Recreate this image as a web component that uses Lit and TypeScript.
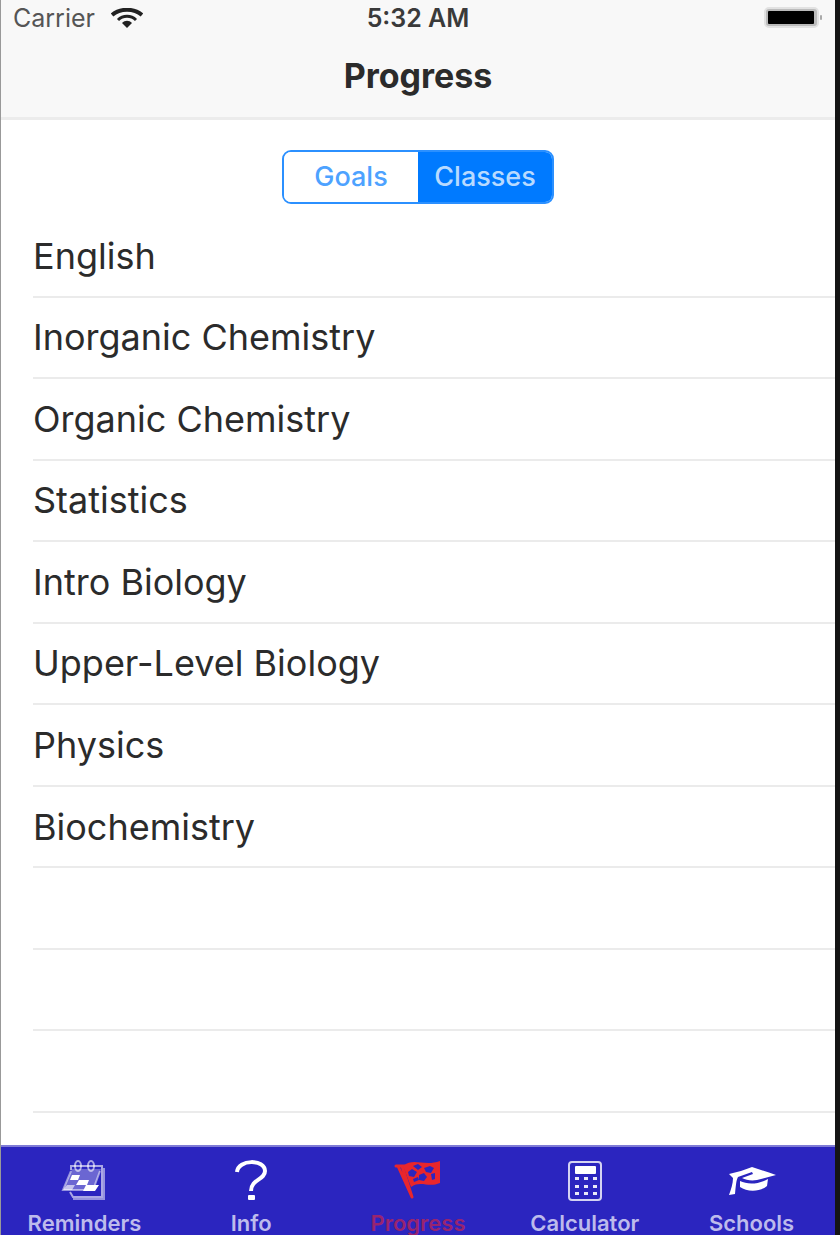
import { LitElement, html, css, svg } from "lit";
import { customElement, state } from "lit/decorators.js";
import { classMap } from "lit/directives/class-map.js";

const icons = {
  reminders: svg`
    <g fill="none" stroke="#fff" stroke-opacity=".6" stroke-width="2">
      <path d="M11 10V6H42V37H13L10 32"/>
      <path d="M44 8V39H13" stroke-opacity=".5"/>
      <path d="M11 11L3 30H33L40 11" stroke-opacity=".5"/>
      <ellipse cx="18" cy="6" rx="3" ry="5"/>
      <ellipse cx="31" cy="6" rx="3" ry="5"/>
    </g>
    <path fill="#fff" opacity=".3" d="M12 9H41L33 30H3z"/>
    <path fill="#fff" d="M12 15H20L18 20H10zM19 20H29L27 25H16zM26 25H39L35 31H23z"/>
    <path fill="#fff" opacity=".6" d="M3 30L7 25H15L12 30z"/>`,
  info: svg`
    <path fill="none" stroke="#fff" stroke-width="4" d="M10 12C11 -1 38 -1 38 11C38 20 24 19 24 31"/>
    <rect x="21" y="35" width="7" height="5" rx="1" fill="#fff"/>`,
  progress: svg`
    <path fill="none" stroke="#e8262c" stroke-width="3" stroke-linecap="round" stroke-linejoin="round" d="M2 6H11M4 6L18 37M8 6L18 37"/>
    <path fill="#e8262c" fill-rule="evenodd" d="M9 6C20 -3 30 7 46 1V23C34 28 27 20 17 27zM19 6L24 4L28 7L24 10zM30 8L36 6L40 8L37 13L32 12zM14 12L18 9L23 12L20 17L15 16zM25 15L30 13L33 17L30 21L25 20zM37 14L41 13V19L38 20zM19 19L24 17L25 20L20 22z"/>`,
  calculator: svg`
    <rect x="8" y="2" width="32" height="38" rx="3" fill="none" stroke="#fff" stroke-opacity=".8" stroke-width="2"/>
    <rect x="14" y="6" width="21" height="8" rx="1" fill="#fff"/>
    <g fill="#fff" opacity=".9">
      <rect x="14" y="17" width="4" height="3"/><rect x="23" y="17" width="4" height="3"/><rect x="32" y="17" width="4" height="3"/>
      <rect x="14" y="25" width="4" height="3"/><rect x="23" y="25" width="4" height="3"/><rect x="32" y="25" width="4" height="3"/>
      <rect x="14" y="32" width="4" height="3"/><rect x="23" y="32" width="4" height="3"/><rect x="32" y="32" width="4" height="3"/>
    </g>`,
  schools: svg`
    <path fill="#fff" d="M1 14C9 12 17 10 24 7C32 10 40 12 48 15L29 20C23 21 18 20 14 18L25 14L24 12L10 17C8 21 8 25 7 34L1 35C3 29 5 24 5 18z"/>
    <path fill="#fff" d="M12 21C20 25 31 24 40 19L39 26C32 32 19 32 12 27z"/>`,
};

type TabId = keyof typeof icons;

@customElement("app-root")
export class AppRoot extends LitElement {
  static styles = css`
    :host {
      display: block;
      font-family: Inter, "Noto Sans", sans-serif;
      color: #2b2b2b;
    }
    .screen {
      box-sizing: border-box;
      min-height: 100vh;
      display: flex;
      flex-direction: column;
      background: #fff;
      border-left: 1px solid #999;
      border-right: 5px solid #151515;
    }
    .top {
      background: #f8f8f8;
      border-bottom: 3px solid #ececec;
    }
    .status {
      display: grid;
      grid-template-columns: 1fr auto 1fr;
      align-items: center;
      height: 36px;
      padding: 0 12px;
      font-size: 25px;
      line-height: 28px;
    }
    .carrier {
      display: flex;
      align-items: center;
      gap: 16px;
      color: #555;
    }
    .time {
      color: #3a3a3a;
      font-weight: 600;
    }
    .battery {
      justify-self: end;
    }
    .wifi, .battery, .icon {
      display: block;
    }
    .title {
      margin: 0;
      padding: 20px 0 21px;
      font-size: 34px;
      line-height: 40px;
      font-weight: 700;
      text-align: center;
    }
    .segments {
      display: flex;
      align-self: center;
      box-sizing: border-box;
      height: 54px;
      margin: 30px 0 12px;
      border: 2px solid #2b90ff;
      border-radius: 9px;
      overflow: hidden;
    }
    .segment {
      width: 134px;
      padding: 0;
      border: 0;
      background: #fff;
      color: #4da2ff;
      font: 500 27px/32px Inter, "Noto Sans", sans-serif;
    }
    .segment.on {
      background: #007aff;
      color: #b8daff;
    }
    .list {
      flex: 1;
      display: grid;
      grid-auto-rows: 1fr;
      margin: 0;
      padding: 0 0 32px 32px;
      list-style: none;
    }
    .row {
      display: flex;
      align-items: center;
      min-height: 48px;
      border-bottom: 2px solid #ebebeb;
      font-size: 36px;
      line-height: 40px;
    }
    .tabs {
      display: flex;
      background: #2b25bf;
      border-top: 2px solid #7f7bd6;
    }
    .tab {
      flex: 1;
      display: flex;
      flex-direction: column;
      align-items: center;
      gap: 9px;
      padding: 13px 0 0;
      color: #bdbbec;
      font-size: 22px;
      font-weight: 600;
      line-height: 24px;
      text-decoration: none;
    }
    .tab.on {
      color: #98246f;
    }
  `;

  @state() private segment = "Classes";
  @state() private tab: TabId = "progress";

  private segments = ["Goals", "Classes"];

  private classes = [
    "English",
    "Inorganic Chemistry",
    "Organic Chemistry",
    "Statistics",
    "Intro Biology",
    "Upper-Level Biology",
    "Physics",
    "Biochemistry",
    "",
    "",
    "",
  ];

  private tabs: { id: TabId; label: string }[] = [
    { id: "reminders", label: "Reminders" },
    { id: "info", label: "Info" },
    { id: "progress", label: "Progress" },
    { id: "calculator", label: "Calculator" },
    { id: "schools", label: "Schools" },
  ];

  render() {
    return html`
      <div class="screen">
        <header class="top">
          <div class="status">
            <span class="carrier">
              Carrier
              <svg class="wifi" width="32" height="20" viewBox="0 0 32 20" aria-hidden="true">
                <g fill="none" stroke="#222">
                  <path stroke-width="4" d="M1 7C9 0 23 0 31 7"/>
                  <path stroke-width="3" d="M7 12C12 7 20 7 25 12"/>
                </g>
                <path fill="#222" d="M11 15C14 12 18 12 21 15L16 20z"/>
              </svg>
            </span>
            <span class="time">5:32 AM</span>
            <svg class="battery" width="60" height="22" viewBox="0 0 60 22" aria-hidden="true">
              <rect x="2" y="1" width="53" height="19" rx="4" fill="#bbb" stroke="#e2e2e2" stroke-width="2"/>
              <rect x="5" y="4" width="46" height="13" rx="1"/>
              <rect x="57" y="8" width="2" height="5" rx="1" fill="#aaa"/>
            </svg>
          </div>
          <h1 class="title">Progress</h1>
        </header>
        <div class="segments">
          ${this.segments.map(
            (s) => html`<button
              class=${classMap({ segment: true, on: s === this.segment })}
              aria-pressed=${s === this.segment}
              @click=${() => (this.segment = s)}
            >${s}</button>`
          )}
        </div>
        <ul class="list">
          ${this.classes.map((c) => html`<li class="row">${c}</li>`)}
        </ul>
        <nav class="tabs">
          ${this.tabs.map(
            (t) => html`<a
              class=${classMap({ tab: true, on: t.id === this.tab })}
              href="#${t.id}"
              @click=${() => (this.tab = t.id)}
            >
              <svg class="icon" width="48" height="42" viewBox="0 0 48 42" aria-hidden="true">${icons[t.id]}</svg>
              <span>${t.label}</span>
            </a>`
          )}
        </nav>
      </div>
    `;
  }
}
